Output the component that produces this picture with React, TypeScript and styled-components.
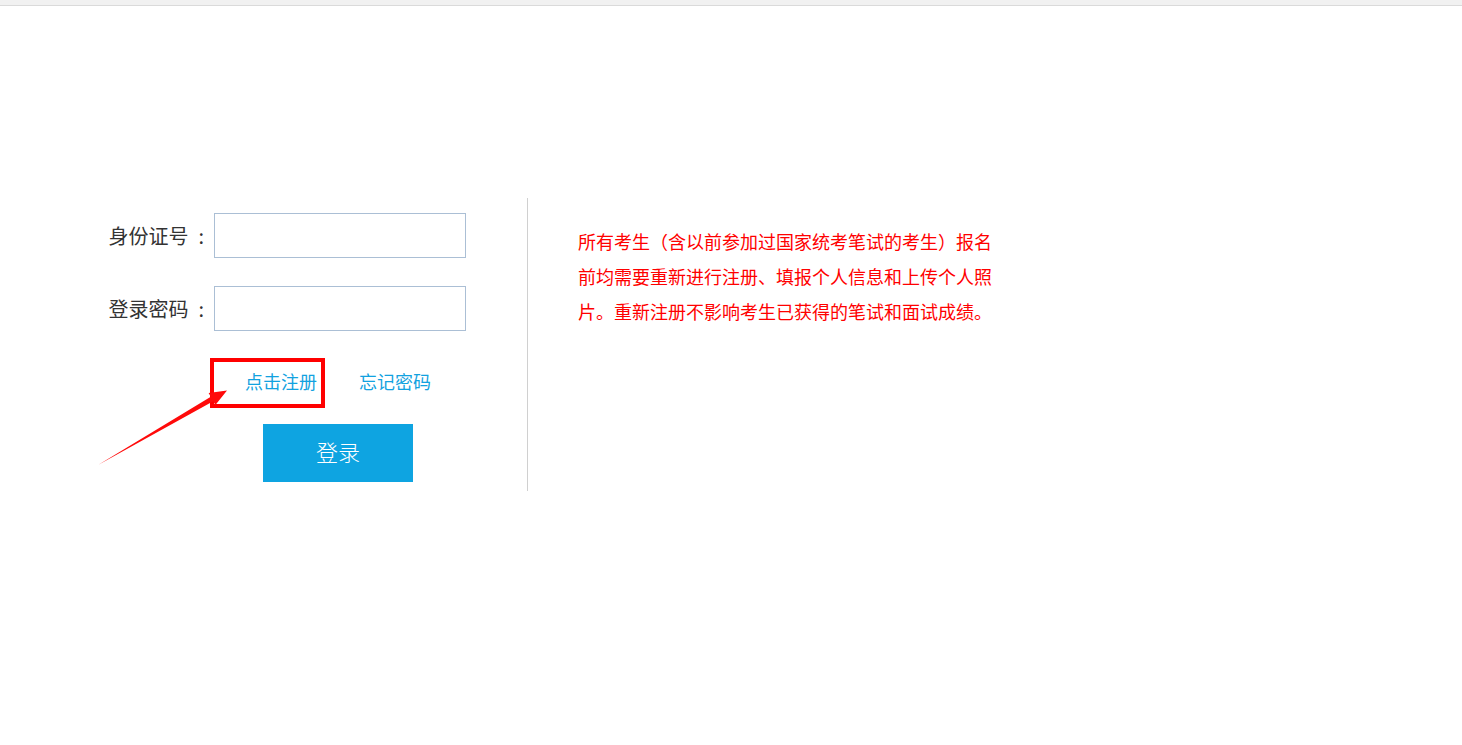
import * as React from "react";
import styled, { createGlobalStyle } from "styled-components";

const GlobalStyle = createGlobalStyle`
  html, body {
    margin: 0;
    padding: 0;
    background: #ffffff;
    font-family: "Noto Sans CJK SC", "Noto Sans", sans-serif;
  }
`;

// ----------------------------------------------------------------------
// Page frame
// ----------------------------------------------------------------------

const TopStrip = styled.div`
  height: 5px;
  background: #f1f1f1;
  border-bottom: 1px solid #dadada;
`;

const Main = styled.main`
  display: flex;
  align-items: stretch;
  padding: 192px 0 0 100px;
`;

// ----------------------------------------------------------------------
// Login panel (left)
// ----------------------------------------------------------------------

const LoginPanel = styled.section`
  position: relative;
  width: 428px;
  padding: 15px 0 9px;
  border-right: 1px solid #d0d0d0;
  box-sizing: border-box;
`;

const FieldRow = styled.div`
  display: flex;
  align-items: center;
  gap: 10px;
  & + & {
    margin-top: 28px;
  }
`;

const Label = styled.label`
  width: 104px;
  display: flex;
  justify-content: flex-end;
  align-items: center;
  font-size: 20px;
  color: #333333;
  white-space: nowrap;
`;

const Colon = styled.span`
  margin-left: 10px;
`;

const TextInput = styled.input`
  width: 252px;
  height: 45px;
  box-sizing: border-box;
  border: 1px solid #abbfd5;
  padding: 0 8px;
  font-size: 16px;
  outline: none;
  background: #ffffff;
`;

const LinkRow = styled.div`
  display: flex;
  align-items: center;
  gap: 34px;
  height: 50px;
  margin: 27px 0 0 110px;
`;

const Link = styled.a<{ $marked?: boolean }>`
  position: relative;
  display: flex;
  align-items: center;
  height: 100%;
  box-sizing: border-box;
  padding: ${({ $marked }) => ($marked ? "0 8px 5px 35px" : "0 0 5px")};
  font-size: 18px;
  color: #12a2e0;
  text-decoration: none;
  cursor: pointer;
`;

const MarkBox = styled.span`
  position: absolute;
  inset: 0;
  border: 4px solid #ff0000;
  pointer-events: none;
`;

const ArrowMark = styled.svg`
  position: absolute;
  left: -2px;
  top: 190px;
  pointer-events: none;
`;

const SubmitButton = styled.button`
  display: block;
  width: 150px;
  height: 58px;
  margin: 16px 0 0 163px;
  padding: 0 0 4px;
  border: none;
  background: #0ea4e1;
  color: #ffffff;
  font-family: inherit;
  font-size: 22px;
  font-weight: 300;
  cursor: pointer;
`;

// ----------------------------------------------------------------------
// Notice (right)
// ----------------------------------------------------------------------

const Notice = styled.p`
  margin: 0;
  padding: 26px 0 0 50px;
  width: 415px;
  font-size: 18px;
  line-height: 35px;
  color: #ff0000;
`;

export default function App() {
  return (
    <>
      <GlobalStyle />
      <TopStrip />
      <Main>
        <LoginPanel>
          <FieldRow>
            <Label htmlFor="idcard">
              身份证号<Colon>:</Colon>
            </Label>
            <TextInput id="idcard" type="text" />
          </FieldRow>
          <FieldRow>
            <Label htmlFor="pwd">
              登录密码<Colon>:</Colon>
            </Label>
            <TextInput id="pwd" type="password" />
          </FieldRow>
          <LinkRow>
            <Link $marked>
              点击注册
              <MarkBox />
            </Link>
            <Link>忘记密码</Link>
          </LinkRow>
          <SubmitButton type="button">登录</SubmitButton>
          <ArrowMark width="134" height="80" viewBox="0 0 134 80">
            <polygon
              points="0,77 112.8,8.8 110.6,4.9 129,2.5 117.4,17.1 115.2,13.2"
              fill="#ff0a0a"
            />
          </ArrowMark>
        </LoginPanel>
        <Notice>
          所有考生（含以前参加过国家统考笔试的考生）报名前均需要重新进行注册、填报个人信息和上传个人照片。重新注册不影响考生已获得的笔试和面试成绩。
        </Notice>
      </Main>
    </>
  );
}
